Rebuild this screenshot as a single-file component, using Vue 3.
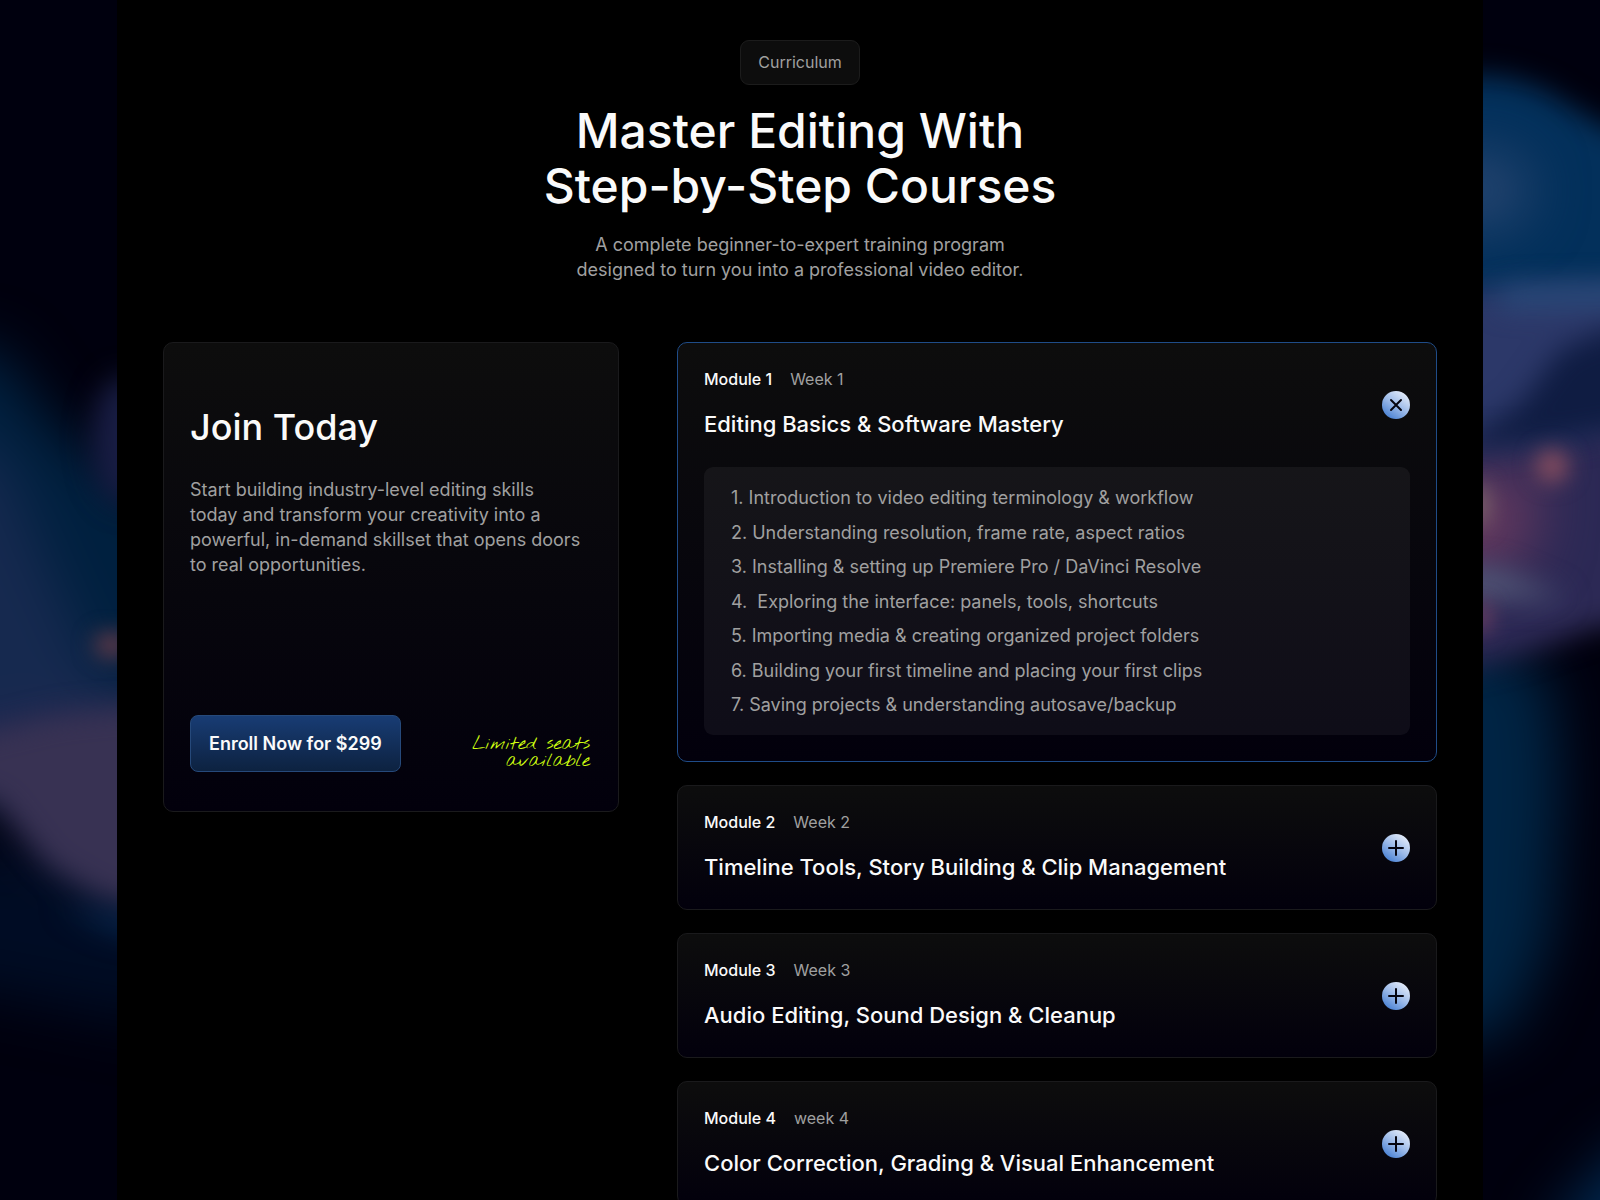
<template>
  <div class="page">
    <svg class="backdrop" viewBox="0 0 1600 1200" preserveAspectRatio="none" aria-hidden="true">
      <defs>
        <filter id="haze" x="-50%" y="-50%" width="200%" height="200%">
          <feGaussianBlur stdDeviation="28" />
        </filter>
        <filter id="soft" x="-50%" y="-50%" width="200%" height="200%">
          <feGaussianBlur stdDeviation="14" />
        </filter>
        <filter id="glow" x="-100%" y="-100%" width="300%" height="300%">
          <feGaussianBlur stdDeviation="11" />
        </filter>
      </defs>
      <rect width="1600" height="1200" fill="#00000e" />

      <g filter="url(#haze)">
        <path d="M-80 340 L0 350 L60 430 L200 530 L200 780 L-80 800 Z" fill="#00203f" />
        <path d="M-80 440 L0 450 L45 560 L100 680 L200 720 L200 770 L-80 770 Z" fill="#16294f" />
        <path d="M-80 840 L0 850 L180 900 L180 1030 L-80 980 Z" fill="#000c24" />
        <path d="M-80 740 L180 700 L180 890 L100 880 L50 850 L0 790 Z" fill="#2a2a52" />
      </g>
      <g filter="url(#soft)">
        <ellipse cx="124" cy="440" rx="32" ry="64" fill="#181d44" />
        <path d="M60 716 L180 704 L180 912 L100 894 L50 864 L0 800 L-60 780 L-60 745 Z" fill="#383253" />
        <path d="M60 905 L180 925 L180 945 L110 930 Z" fill="#082a52" />
      </g>
      <ellipse cx="112" cy="645" rx="18" ry="12" fill="#6a3c48" filter="url(#glow)" />

      <g filter="url(#haze)">
        <path d="M1400 620 L1500 640 L1550 680 L1560 780 L1550 940 L1510 1030 L1400 1060 Z" fill="#002444" />
        <path d="M1540 1240 L1620 1150 L1700 1120 L1700 1280 Z" fill="#002850" />
      </g>
      <g filter="url(#soft)">
        <path d="M1400 76 L1500 76 L1540 88 L1600 124 L1680 155 L1680 330 L1400 330 Z" fill="#03305b" />
        <path d="M1400 290 L1680 285 L1680 450 L1400 480 Z" fill="#2c3869" />
        <path d="M1400 460 L1560 445 L1680 400 L1680 622 L1600 626 L1520 655 L1400 685 Z" fill="#2c2955" />
      </g>
      <g filter="url(#haze)">
        <ellipse cx="1480" cy="190" rx="50" ry="40" fill="#264570" />
        <path d="M1400 480 L1540 470 L1530 560 L1400 600 Z" fill="#62385e" />
      </g>
      <g filter="url(#soft)">
        <path d="M1500 288 L1680 283 L1680 302 L1500 306 Z" fill="#2c5080" />
        <path d="M1440 455 L1520 405 L1560 350 L1610 328 L1680 330 L1680 420 L1560 440 Z" fill="#0f1c42" />
        <path d="M1400 562 L1500 570 L1570 600 L1400 594 Z" fill="#505878" />
      </g>
      <circle cx="1552" cy="466" r="16" fill="#8c5060" filter="url(#glow)" />
      <ellipse cx="1478" cy="505" rx="10" ry="22" fill="#80696c" filter="url(#glow)" />
      <ellipse cx="1480" cy="618" rx="10" ry="14" fill="#7c4464" filter="url(#glow)" />
    </svg>

    <main class="curriculum">
      <header class="intro">
        <span class="badge">Curriculum</span>
        <h1>Master Editing With<br />Step-by-Step Courses</h1>
        <p>A complete beginner-to-expert training program<br />designed to turn you into a professional video editor.</p>
      </header>

      <div class="columns">
        <section class="card join">
          <h2>Join Today</h2>
          <p>
            Start building industry-level editing skills<br />
            today and transform your creativity into a<br />
            powerful, in-demand skillset that opens doors<br />
            to real opportunities.
          </p>
          <div class="join__footer">
            <button class="btn--enroll" type="button">Enroll Now for $299</button>
            <span class="join__note">Limited seats<br />available</span>
          </div>
        </section>

        <div class="modules">
          <article
            v-for="(item, index) in modules"
            :key="item.name"
            class="card module"
            :class="{ 'module--open': openIndex === index }"
          >
            <div class="module__header">
              <div class="module__heading">
                <div class="module__meta">
                  <span class="module__name">{{ item.name }}</span>
                  <span>{{ item.week }}</span>
                </div>
                <h3>{{ item.title }}</h3>
              </div>
              <button
                class="btn--toggle"
                type="button"
                :aria-expanded="openIndex === index"
                :aria-label="item.title"
                @click="toggle(index)"
              >
                <svg viewBox="0 0 28 28" aria-hidden="true">
                  <path v-if="openIndex === index" d="M9 9L19 19M19 9L9 19" />
                  <path v-else d="M14 7V21M7 14H21" />
                </svg>
              </button>
            </div>
            <ul v-if="openIndex === index && item.lessons.length" class="lessons">
              <li v-for="lesson in item.lessons" :key="lesson">{{ lesson }}</li>
            </ul>
          </article>
        </div>
      </div>
    </main>
  </div>
</template>

<script setup>
import { ref } from 'vue'

const openIndex = ref(0)

const modules = [
  {
    name: 'Module 1',
    week: 'Week 1',
    title: 'Editing Basics & Software Mastery',
    lessons: [
      '1. Introduction to video editing terminology & workflow',
      '2. Understanding resolution, frame rate, aspect ratios',
      '3. Installing & setting up Premiere Pro / DaVinci Resolve',
      '4.  Exploring the interface: panels, tools, shortcuts',
      '5. Importing media & creating organized project folders',
      '6. Building your first timeline and placing your first clips',
      '7. Saving projects & understanding autosave/backup'
    ]
  },
  {
    name: 'Module 2',
    week: 'Week 2',
    title: 'Timeline Tools, Story Building & Clip Management',
    lessons: []
  },
  {
    name: 'Module 3',
    week: 'Week 3',
    title: 'Audio Editing, Sound Design & Cleanup',
    lessons: []
  },
  {
    name: 'Module 4',
    week: 'week 4',
    title: 'Color Correction, Grading & Visual Enhancement',
    lessons: []
  }
]

const toggle = (index) => {
  openIndex.value = openIndex.value === index ? -1 : index
}
</script>

<style>
body {
  background: #00000e;
}
</style>

<style scoped>
.page {
  position: relative;
  min-height: 100vh;
  padding: 0 117px;
  font-family: Inter, 'Liberation Sans', sans-serif;
  color: #a0a0a0;
}

.backdrop {
  position: fixed;
  inset: 0;
  width: 100%;
  height: 100%;
}

/* linearRGB blurs band visibly on colours this dark */
.backdrop filter {
  color-interpolation-filters: sRGB;
}

.curriculum {
  position: relative;
  min-height: 100vh;
  padding: 40px 46px;
  box-sizing: border-box;
  background: #000;
}

h1,
h2,
h3,
p,
ul {
  margin: 0;
}

h1,
h2,
h3 {
  color: #fafafa;
  font-weight: 500;
}

.intro {
  display: flex;
  flex-direction: column;
  align-items: center;
  text-align: center;
  margin-bottom: 60px;
}

.badge {
  padding: 11px 17px;
  border: 1px solid #1c1c1c;
  border-radius: 9px;
  background: #0d0d0d;
  font-size: 16px;
  line-height: 21px;
}

.intro h1 {
  margin: 18px 0 19px;
  font-size: 48px;
  line-height: 55px;
}

.intro p,
.join p,
.lessons {
  font-size: 18px;
  line-height: 25px;
}

.columns {
  display: grid;
  grid-template-columns: 3fr 5fr;
  gap: 58px;
  align-items: start;
}

.card {
  box-sizing: border-box;
  border: 1px solid #1a1a1c;
  border-radius: 10px;
  background: linear-gradient(#0d0d0d, #02000c);
}

.join {
  display: flex;
  flex-direction: column;
  min-height: 470px;
  padding: 60px 26px 39px;
}

.join h2 {
  margin-bottom: 26px;
  font-size: 36px;
  line-height: 48px;
}

.join__footer {
  display: flex;
  justify-content: space-between;
  align-items: center;
  margin-top: auto;
}

.btn--enroll {
  padding: 15px 18px;
  border: 1px solid #26497a;
  border-radius: 8px;
  background: linear-gradient(#183c74, #0d2240);
  color: #fafafa;
  font-family: inherit;
  font-size: 18px;
  font-weight: 600;
  line-height: 25px;
  cursor: pointer;
}

.join__note {
  padding: 18px 2px 0 0;
  color: #d0ff10;
  font-family: 'Nothing You Could Do', 'La Belle Aurore', cursive;
  font-size: 19px;
  font-weight: 600;
  line-height: 17px;
  text-align: right;
}

.modules {
  display: flex;
  flex-direction: column;
  gap: 23px;
}

.module {
  padding: 26px;
}

.module--open {
  border-color: #1f4c88;
}

.module__header {
  display: flex;
  justify-content: space-between;
  align-items: center;
}

.module__meta {
  display: flex;
  gap: 18px;
  margin-bottom: 18px;
  font-size: 16px;
  line-height: 21px;
}

.module__name {
  color: #fafafa;
  font-weight: 500;
}

.module h3 {
  font-size: 22px;
  line-height: 32px;
}

.btn--toggle {
  flex: none;
  width: 28px;
  height: 28px;
  padding: 0;
  border: 0;
  border-radius: 50%;
  background: linear-gradient(215deg, #f0f4fc 5%, #9dbbe9 50%, #3c78d0 95%);
  cursor: pointer;
}

.btn--toggle svg {
  display: block;
  fill: none;
  stroke: #050510;
  stroke-width: 2;
  stroke-linecap: round;
}

.lessons {
  display: grid;
  align-content: space-between;
  min-height: 232px;
  margin-top: 27px;
  padding: 18px 27px;
  border-radius: 9px;
  background: rgba(255, 255, 255, 0.05);
  list-style: none;
  white-space: pre-wrap;
}
</style>
